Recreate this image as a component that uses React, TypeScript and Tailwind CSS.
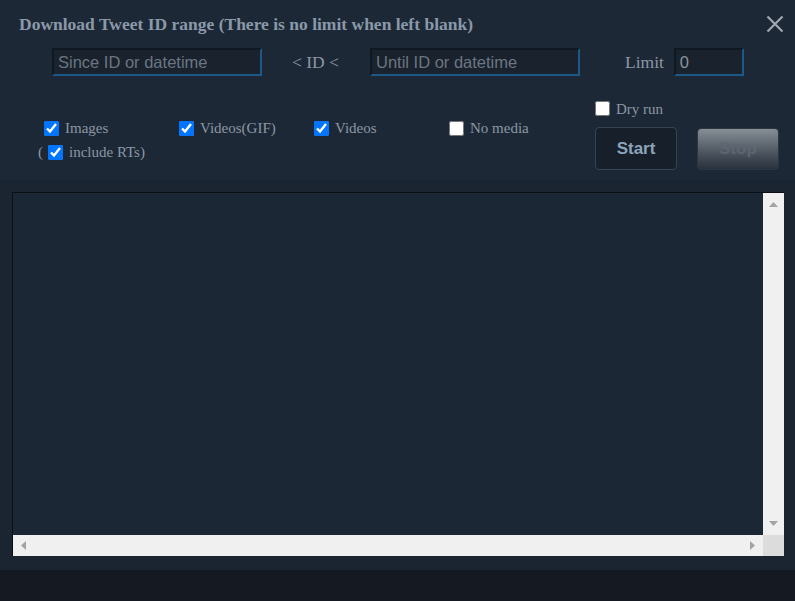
import React from "react";

function Check({ checked }: { checked?: boolean }) {
  return (
    <input
      type="checkbox"
      defaultChecked={checked}
      className="w-[15px] h-[15px] m-0 shrink-0"
    />
  );
}

function Opt({ label, checked }: { label: string; checked?: boolean }) {
  return (
    <label className="flex items-center gap-[6px] h-[15px] leading-[15px]">
      <Check checked={checked} />
      <span>{label}</span>
    </label>
  );
}

const inputCls =
  "h-[28px] bg-[#19222d] border-2 border-t-[#0f1922] border-l-[#0f1922] border-b-[#1d5887] border-r-[#1d5887] px-[4px] font-['Liberation_Sans',sans-serif] text-[16.5px] text-[#8a95a0] placeholder:text-[#6c7682] outline-none";

export default function App() {
  return (
    <div className="w-[795px] h-[601px] flex flex-col bg-[#1b2532] font-['Liberation_Serif',serif] text-[#8b97a4] overflow-hidden">
      {/* header */}
      <div className="h-[180px] bg-[#1d2836] shrink-0">
        <div className="flex items-start justify-between pt-[14px] pl-[19px] pr-[11px]">
          <div className="font-bold text-[17.5px] leading-[20px] text-[#8a99a9]">
            Download Tweet ID range (There is no limit when left blank)
          </div>
          <svg width="18" height="18" viewBox="0 0 18 18" className="mt-[1px]">
            <path d="M1.5 1.5 L16.5 16.5 M16.5 1.5 L1.5 16.5" stroke="#9ea7b1" strokeWidth="2.2" />
          </svg>
        </div>

        <div className="flex items-center mt-[14px] pl-[52px] text-[17.5px]">
          <input className={`${inputCls} w-[210px]`} placeholder="Since ID or datetime" />
          <span className="ml-[30px] mr-[31px]">&lt; ID &lt;</span>
          <input className={`${inputCls} w-[210px]`} placeholder="Until ID or datetime" />
          <span className="ml-[45px] mr-[10px]">Limit</span>
          <input className={`${inputCls} w-[70px]`} defaultValue="0" />
        </div>

        <div className="flex mt-[25px] text-[15px]">
          <div className="pt-[20px] pl-[44px] w-[595px]">
            <div className="flex">
              <div className="w-[135px]"><Opt label="Images" checked /></div>
              <div className="w-[135px]"><Opt label="Videos(GIF)" checked /></div>
              <div className="w-[135px]"><Opt label="Videos" checked /></div>
              <Opt label="No media" />
            </div>
            <div className="flex items-center mt-[9px] -ml-[6px] gap-[5px] h-[15px]">
              <span>(</span>
              <Opt label="include RTs)" checked />
            </div>
          </div>
          <div className="flex flex-col">
            <label className="flex items-center gap-[6px] h-[15px] leading-[15px]">
              <Check />
              <span className="mt-[2px]">Dry run</span>
            </label>
            <div className="flex gap-[20px] mt-[11px]">
              <button className="w-[82px] h-[43px] rounded-[4px] border border-[#364454] bg-[#17202a] font-['Liberation_Sans',sans-serif] font-bold text-[17px] text-[#8ca4ba]">
                Start
              </button>
              <button className="w-[82px] h-[42px] mt-[1px] rounded-[4px] border border-[#2c3744] bg-gradient-to-b from-[#878e96] to-[#28313c] font-['Liberation_Sans',sans-serif] font-bold text-[17px] text-[#5d6671]">
                Stop
              </button>
            </div>
          </div>
        </div>
      </div>

      {/* log area */}
      <div className="flex-1 pt-[12px] pl-[12px] pr-[11px]">
        <div className="h-[364px] border-t border-l border-[#0a0f15] bg-[#1c2735] flex flex-col">
          <div className="flex flex-1">
            <div className="flex-1" />
            <div className="w-[21px] bg-[#f0f0f0] flex flex-col items-center justify-between py-[9px]">
              <svg width="9" height="5" viewBox="0 0 9 5"><path d="M0 5 L4.5 0 L9 5 Z" fill="#a3a3a3" /></svg>
              <svg width="9" height="5" viewBox="0 0 9 5"><path d="M0 0 L4.5 5 L9 0 Z" fill="#a3a3a3" /></svg>
            </div>
          </div>
          <div className="flex h-[21px]">
            <div className="flex-1 bg-[#f0f0f0] flex items-center justify-between px-[8px]">
              <svg width="5" height="9" viewBox="0 0 5 9"><path d="M5 0 L0 4.5 L5 9 Z" fill="#a3a3a3" /></svg>
              <svg width="5" height="9" viewBox="0 0 5 9"><path d="M0 0 L5 4.5 L0 9 Z" fill="#a3a3a3" /></svg>
            </div>
            <div className="w-[21px] bg-[#dcdcdc]" />
          </div>
        </div>
      </div>

      {/* footer */}
      <div className="h-[31px] bg-[#151a22] shrink-0" />
    </div>
  );
}
